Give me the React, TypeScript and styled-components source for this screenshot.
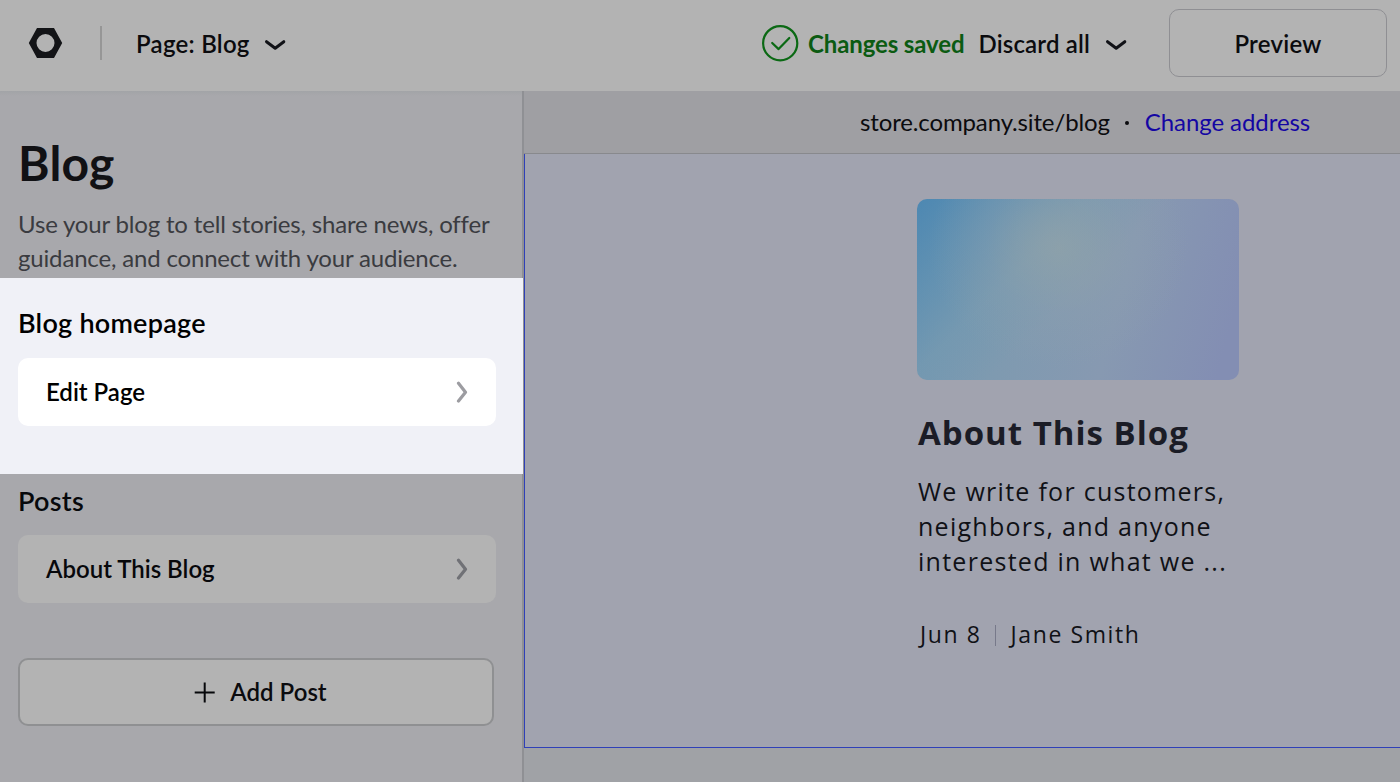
import React from "react";
import styled, { createGlobalStyle } from "styled-components";

const GlobalStyle = createGlobalStyle`
  * { box-sizing: border-box; }
  body { margin: 0; overflow: hidden; background: #a8a8ac; font-family: Lato, "Liberation Sans", sans-serif; color: #0b0b0e; }
  h1, h2, h3, p { margin: 0; }
  button { font: inherit; color: inherit; }
  svg { display: block; flex: none; }
`;

const Screen = styled.div`
  width: 1400px;
  height: 782px;
  display: flex;
  flex-direction: column;
  overflow: hidden;
`;

const Toolbar = styled.header`
  height: 91px;
  flex: none;
  display: flex;
  align-items: flex-start;
  padding: 9px 13px 0 28px;
  background: #b3b3b3;
  font-size: 24px;
  font-weight: 600;
  line-height: 69px;
  white-space: nowrap;
`;

const Divider = styled.div`
  width: 2px;
  height: 34px;
  margin: 17px 34px 0 37px;
  background: #969696;
`;

const MenuTrigger = styled.div<{ $gap: number; $spacing: string }>`
  display: flex;
  align-items: center;
  gap: ${(p) => p.$gap}px;
  letter-spacing: ${(p) => p.$spacing};
`;

const Status = styled.div`
  display: flex;
  align-items: center;
  gap: 9px;
  margin-left: auto;
  margin-right: 14px;
  color: #0b5b12;
  font-weight: 700;
  letter-spacing: -0.12px;
`;

const PreviewButton = styled.button`
  width: 218px;
  height: 68px;
  margin-left: 42px;
  padding: 0;
  border: 1.5px solid #8f8f93;
  border-radius: 10px;
  background: transparent;
  line-height: normal;
  letter-spacing: 0.25px;
`;

const Body = styled.div`
  flex: 1;
  min-height: 0;
  display: flex;
`;

const Sidebar = styled.aside`
  width: 524px;
  flex: none;
  border-right: 2px solid #8f9094;
  background: linear-gradient(#a2a4a7, #a8a8ac 5px);
`;

const Intro = styled.section`
  height: 187px;
  padding: 43px 0 0 18px;
`;

const Title = styled.h1`
  font-size: 48px;
  line-height: 58px;
  font-weight: 700;
  letter-spacing: 0.2px;
  color: #111114;
`;

const Description = styled.p`
  margin-top: 15px;
  font-size: 24px;
  line-height: 34px;
  letter-spacing: -0.17px;
  color: #3a3b40;
  white-space: nowrap;
`;

const Section = styled.section<{ $active?: boolean }>`
  height: ${(p) => (p.$active ? 196 : 184)}px;
  margin-right: -1px;
  padding: ${(p) => (p.$active ? 28 : 10)}px 27px 0 18px;
  background: ${(p) => (p.$active ? "#f0f1f7" : "transparent")};
  color: ${(p) => (p.$active ? "#000" : "#07080b")};
`;

const SectionTitle = styled.h2<{ $gap: number }>`
  margin-bottom: ${(p) => p.$gap}px;
  font-size: 27px;
  line-height: 34px;
  font-weight: 600;
  letter-spacing: 0.25px;
`;

const LinkCard = styled.div<{ $active?: boolean }>`
  display: flex;
  align-items: center;
  justify-content: space-between;
  width: 478px;
  height: 68px;
  padding: 0 28px 1px;
  border-radius: 10px;
  background: ${(p) => (p.$active ? "#fff" : "#b3b3b3")};
  font-size: 24px;
  font-weight: 600;
`;

const AddButton = styled.button`
  display: flex;
  align-items: center;
  justify-content: center;
  gap: 15px;
  width: 476px;
  height: 68px;
  margin-left: 18px;
  padding: 0 0 1px 8px;
  border: 2px solid #8f9092;
  border-radius: 10px;
  background: #b3b3b3;
  font-size: 24px;
  font-weight: 600;
`;

const Workspace = styled.main`
  flex: 1;
  min-width: 0;
  display: flex;
  flex-direction: column;
  background: #a0a2a6;
`;

const AddressBar = styled.div`
  height: 63px;
  flex: none;
  display: flex;
  align-items: center;
  padding: 0 0 2px 336px;
  border-bottom: 1px solid #88898d;
  background: #9f9fa3;
  font-size: 24px;
  letter-spacing: -0.13px;
  white-space: nowrap;
`;

const Dot = styled.span`
  width: 4px;
  height: 4px;
  margin: 3px 16px 0 15px;
  border-radius: 50%;
  background: #0b0b0e;
`;

const AddressLink = styled.a`
  color: #1406a3;
  letter-spacing: -0.07px;
`;

const Canvas = styled.div`
  height: 594px;
  padding: 45px 0 0 393px;
  border-left: 1px solid #2f40b8;
  border-bottom: 1px solid #2f40b8;
  background: #a1a3af;
`;

const Post = styled.article`
  width: 322px;
  font-family: "Open Sans", "Noto Sans", sans-serif;
  white-space: nowrap;
`;

const Cover = styled.div`
  height: 181px;
  margin: 0 1px 0 -1px;
  border-radius: 10px;
  background:
    radial-gradient(ellipse 130px 120px at 44% 27%, rgba(144, 162, 169, 0.8), rgba(142, 160, 173, 0.3) 55%, rgba(142, 160, 173, 0) 100%),
    linear-gradient(135deg, rgba(75, 135, 178, 0.95) 0%, rgba(88, 142, 178, 0.7) 18%, rgba(108, 152, 176, 0.4) 34%, rgba(120, 155, 178, 0) 50%),
    linear-gradient(105deg, #7497b2 0%, #7e9ab0 32%, #8799b1 62%, #838eb3 94%);
`;

const PostTitle = styled.h3`
  margin-top: 30px;
  font-size: 33px;
  line-height: 46px;
  font-weight: 700;
  letter-spacing: 1px;
  color: #1b1c26;
`;

const Excerpt = styled.p`
  margin-top: 18px;
  font-size: 25px;
  line-height: 35px;
  letter-spacing: 1.27px;
  color: #101116;
`;

const Meta = styled.div`
  display: flex;
  align-items: center;
  margin-top: 40px;
  padding-left: 2px;
  font-size: 23px;
  line-height: 30px;
  letter-spacing: 1.6px;
  color: #101116;
`;

const MetaRule = styled.span`
  width: 1px;
  height: 21px;
  margin: 2px 15px 0 13px;
  background: #77798a;
`;

const LogoMark = styled.svg`
  margin-top: 18px;
`;

const Logo = () => (
  <LogoMark width="35" height="32" viewBox="0 0 35 32">
    <path fillRule="evenodd" fill="#131417" d="M9 1H26L34.2 16L26 31H9L.8 16ZM17.5 7a9 9 0 1 0 0 18a9 9 0 0 0 0-18Z" />
  </LogoMark>
);

const ChevronDown = () => (
  <svg width="22" height="14" viewBox="0 0 22 14" fill="none" stroke="#111217" strokeWidth="3" strokeLinecap="round" strokeLinejoin="round">
    <path d="M2.5 4.7L11.2 11.2L19.8 4.7" />
  </svg>
);

const ChevronRight = ({ color }: { color: string }) => (
  <svg width="12" height="22" viewBox="0 0 12 22" fill="none" stroke={color} strokeWidth="3.2" strokeLinecap="round" strokeLinejoin="round">
    <path d="M2.5 2.3L9.5 11.2L2.5 20.1" />
  </svg>
);

const SavedIcon = () => (
  <svg width="37" height="37" viewBox="0 0 37 37" fill="none" stroke="#0b6914" strokeWidth="2.2" strokeLinecap="round" strokeLinejoin="round">
    <circle cx="18.2" cy="18.2" r="17.1" />
    <path d="M10.2 18L16.6 24.1L27.3 13" />
  </svg>
);

const PlusIcon = () => (
  <svg width="22" height="22" viewBox="0 0 22 22" fill="none" stroke="#07080b" strokeWidth="2">
    <path d="M11.7 1.5V21.5M1.7 11.5H21.7" />
  </svg>
);

export default function App() {
  return (
    <>
      <GlobalStyle />
      <Screen>
        <Toolbar>
          <Logo />
          <Divider />
          <MenuTrigger $gap={14} $spacing="0.27px">
            Page: Blog
            <ChevronDown />
          </MenuTrigger>
          <Status>
            <SavedIcon />
            Changes saved
          </Status>
          <MenuTrigger $gap={15} $spacing="0.17px">
            Discard all
            <ChevronDown />
          </MenuTrigger>
          <PreviewButton>Preview</PreviewButton>
        </Toolbar>
        <Body>
          <Sidebar>
            <Intro>
              <Title>Blog</Title>
              <Description>
                Use your blog to tell stories, share news, offer
                <br />
                guidance, and connect with your audience.
              </Description>
            </Intro>
            <Section $active>
              <SectionTitle $gap={18}>Blog homepage</SectionTitle>
              <LinkCard $active>
                Edit Page
                <ChevronRight color="#9c9ca1" />
              </LinkCard>
            </Section>
            <Section>
              <SectionTitle $gap={17}>Posts</SectionTitle>
              <LinkCard>
                About This Blog
                <ChevronRight color="#707176" />
              </LinkCard>
            </Section>
            <AddButton>
              <PlusIcon />
              Add Post
            </AddButton>
          </Sidebar>
          <Workspace>
            <AddressBar>
              store.company.site/blog
              <Dot />
              <AddressLink>Change address</AddressLink>
            </AddressBar>
            <Canvas>
              <Post>
                <Cover />
                <PostTitle>About This Blog</PostTitle>
                <Excerpt>
                  We write for customers,
                  <br />
                  neighbors, and anyone
                  <br />
                  interested in what we ...
                </Excerpt>
                <Meta>
                  Jun 8
                  <MetaRule />
                  Jane Smith
                </Meta>
              </Post>
            </Canvas>
          </Workspace>
        </Body>
      </Screen>
    </>
  );
}
